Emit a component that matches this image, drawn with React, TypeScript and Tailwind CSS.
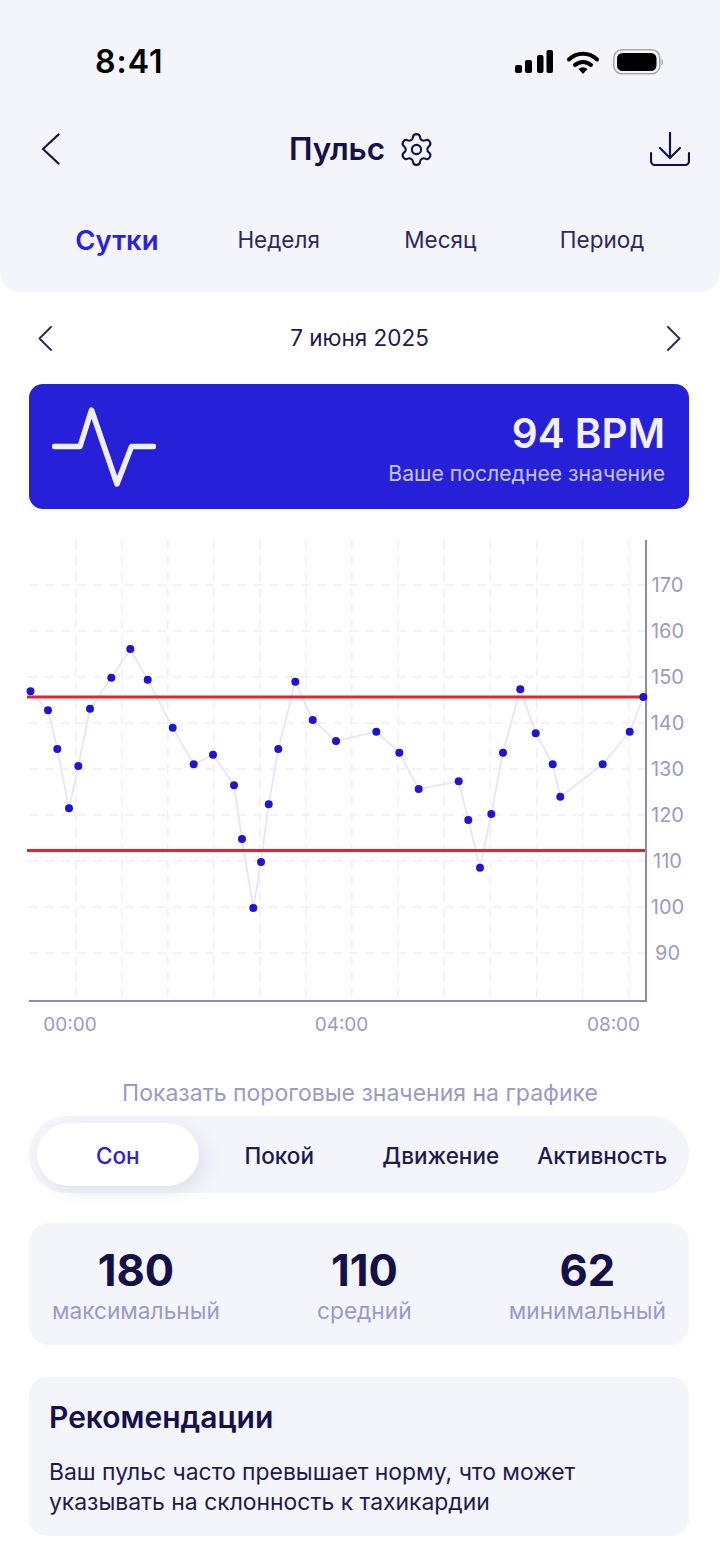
import { Settings } from 'lucide-react';

const dots: [number, number][] = [
  [30.5, 691.3], [48, 710.3], [57.3, 749], [69, 808.3], [78.3, 766], [90, 708.7], [111.3, 677.7], [130.3, 649],
  [147.7, 679.7], [172.7, 727.7], [193.7, 764.3], [213, 754.7], [234, 785.3], [242, 839], [253.3, 908], [261, 862],
  [268.7, 804.3], [278.3, 749], [295.3, 681.7], [312.7, 720], [336, 741], [376.3, 731.7], [399.3, 752.7], [418.7, 789],
  [458.7, 781.3], [468.3, 820], [480, 867.7], [491.3, 814], [503, 752.7], [520.3, 689.3], [535.7, 733.3], [552.7, 764.3],
  [560.3, 796.7], [602.7, 764.3], [629.7, 731.7], [643.3, 697],
];

const gridY = [585, 631, 677, 723, 769, 815, 861, 907, 953];
const gridX = [75.7, 121.7, 167.7, 213.7, 259.7, 305.7, 351.7, 398.3, 444.3, 490.3, 536.7, 582.7, 628.7];
const yLabels = [170, 160, 150, 140, 130, 120, 110, 100, 90];
const TOP = 530;

function StatusBar() {
  return (
    <div className="flex h-[124px] items-center justify-between pl-[95px] pr-[56px]">
      <span className="text-[32px] font-semibold leading-none tracking-[1px] text-black">8:41</span>
      <div className="flex items-center">
        <svg width="38" height="24" viewBox="0 0 38 24" className="mr-[14px]">
          <rect x="0" y="15" width="7" height="8" rx="2" fill="#000" />
          <rect x="10" y="10" width="7" height="13" rx="2" fill="#000" />
          <rect x="22" y="5" width="6.5" height="18" rx="2" fill="#000" />
          <rect x="31.5" y="0" width="6.5" height="23" rx="2" fill="#000" />
        </svg>
        <svg width="32" height="23" viewBox="0 0 32 23" className="mr-[14px]">
          <path d="M2 8.5 A20 20 0 0 1 30 8.5" fill="none" stroke="#000" strokeWidth="4" strokeLinecap="round" />
          <path d="M8 14 A12 12 0 0 1 24 14" fill="none" stroke="#000" strokeWidth="4" strokeLinecap="round" />
          <path d="M16 23 L11.5 18 A6.5 6.5 0 0 1 20.5 18 Z" fill="#000" />
        </svg>
        <svg width="51" height="26" viewBox="0 0 51 26">
          <rect x="0.8" y="0.8" width="46" height="24" rx="8" fill="none" stroke="#a9a9ad" strokeWidth="1.6" />
          <rect x="4" y="4" width="39.5" height="18" rx="5.5" fill="#000" />
          <path d="M48.5 9.5 C50.5 10.5 50.5 15.5 48.5 16.5 Z" fill="#a9a9ad" />
        </svg>
      </div>
    </div>
  );
}

function NavRow() {
  return (
    <div className="flex h-[50px] items-center pl-[41px] pr-[30px]">
      <svg width="19" height="32" viewBox="0 0 19 32" fill="none" stroke="#14104a" strokeWidth="2.2" strokeLinecap="round" strokeLinejoin="round">
        <path d="M17.5 1.5 L2 16 L17.5 30.5" />
      </svg>
      <div className="ml-[229px] flex items-center gap-[13px]">
        <span className="text-[31.5px] font-semibold leading-none text-[#14104a]">Пульс</span>
        <Settings size={37} strokeWidth={1.35} color="#14104a" />
      </div>
      <svg width="40" height="34" viewBox="0 0 40 34" className="ml-auto" fill="none" stroke="#14104a" strokeWidth="2.2" strokeLinecap="round" strokeLinejoin="round">
        <path d="M20 1 V25" />
        <path d="M10 16 L20 26 L30 16" />
        <path d="M1 21 V29 A4 4 0 0 0 5 33 H35 A4 4 0 0 0 39 29 V21" />
      </svg>
    </div>
  );
}

function Chart() {
  return (
    <svg width="720" height="510" viewBox={`0 ${TOP} 720 510`} className="block">
      {gridY.map(y => (
        <line key={y} x1="29" x2="646" y1={y} y2={y} stroke="#eeeefa" strokeWidth="1.3" strokeDasharray="9 7" />
      ))}
      {gridX.map(x => (
        <line key={x} x1={x} x2={x} y1="540" y2="1000" stroke="#eeeefa" strokeWidth="1.3" strokeDasharray="9 7" />
      ))}
      <polyline points={dots.map(d => d.join(',')).join(' ')} fill="none" stroke="#e6e5fb" strokeWidth="1.8" strokeLinejoin="round" />
      <line x1="27" x2="646" y1="697" y2="697" stroke="#e5232a" strokeWidth="3" />
      <line x1="27" x2="646" y1="850.5" y2="850.5" stroke="#e5232a" strokeWidth="3" />
      <path d="M29 1001 H646 V540" fill="none" stroke="#8c8abd" strokeWidth="2" />
      {dots.map(([x, y]) => (
        <circle key={`${x}-${y}`} cx={x} cy={y} r="4" fill="#1d14d6" />
      ))}
      {yLabels.map((v, i) => (
        <text key={v} x="667.5" y={gridY[i] + 7} textAnchor="middle" fontSize="20" fill="#9a9ac4" fontFamily="Inter, sans-serif">
          {v}
        </text>
      ))}
      {[['00:00', 70], ['04:00', 341.5], ['08:00', 613.5]].map(([t, x]) => (
        <text key={t} x={x} y="1031" textAnchor="middle" fontSize="19" fill="#9a9ac4" fontFamily="Inter, sans-serif">
          {t}
        </text>
      ))}
    </svg>
  );
}

export default function App() {
  return (
    <div className="h-[1542px] w-[720px] overflow-hidden bg-white font-['Inter',sans-serif]">
      {/* header */}
      <div className="h-[292px] rounded-b-[20px] bg-[#f4f4fb]">
        <StatusBar />
        <NavRow />
        <div className="mt-[42px] grid grid-cols-4 pl-[36px] pr-[37px]">
          <span className="text-center text-[27.5px] font-semibold leading-[48px] text-[#2a22dc]">Сутки</span>
          <span className="text-center text-[22.5px] leading-[48px] text-[#2b2a5c]">Неделя</span>
          <span className="text-center text-[22.5px] leading-[48px] text-[#2b2a5c]">Месяц</span>
          <span className="text-center text-[22.5px] leading-[48px] text-[#2b2a5c]">Период</span>
        </div>
      </div>

      {/* date */}
      <div className="mt-[26px] flex h-[40px] items-center justify-between pl-[38px] pr-[39px]">
        <svg width="14" height="25" viewBox="0 0 14 25" fill="none" stroke="#2b2a5c" strokeWidth="1.9" strokeLinecap="round" strokeLinejoin="round">
          <path d="M13 1 L1.5 12.5 L13 24" />
        </svg>
        <span className="text-[22.5px] leading-none text-[#1d1a50]">7 июня 2025</span>
        <svg width="14" height="25" viewBox="0 0 14 25" fill="none" stroke="#2b2a5c" strokeWidth="1.9" strokeLinecap="round" strokeLinejoin="round">
          <path d="M1 1 L12.5 12.5 L1 24" />
        </svg>
      </div>

      {/* last value */}
      <div className="ml-[29px] mt-[26px] flex h-[125px] w-[660px] items-center justify-between rounded-[14px] bg-[#2720d9] pl-[23px] pr-[24px] pt-[3px]">
        <svg width="104" height="80" viewBox="0 0 104 80" className="mt-[-3px]" fill="none" stroke="#eeeefc" strokeWidth="5.5" strokeLinecap="round" strokeLinejoin="round">
          <path d="M2.5 39.5 H28 L39.5 3 L65 77 L79.5 39.5 H101.5" />
        </svg>
        <div className="flex flex-col items-end">
          <span className="text-[40.5px] font-semibold leading-[48px] text-[#f1f1fd]">94 BPM</span>
          <span className="mt-[2px] text-[21.2px] leading-[26px] text-[#c6c4f6]">Ваше последнее значение</span>
        </div>
      </div>

      {/* chart */}
      <div className="mt-[21px]">
        <Chart />
      </div>

      {/* thresholds */}
      <p className="mt-[38px] text-center text-[23px] leading-[30px] text-[#9a9ac6]">Показать пороговые значения на графике</p>
      <div className="ml-[29px] mt-[8px] grid h-[77px] w-[660px] grid-cols-4 items-center rounded-[38px] bg-[#f4f4fb] pl-[8px] pr-[6px] text-center text-[22.5px] font-medium text-[#1d1a50]">
        <div className="flex h-[63px] items-center justify-center rounded-[32px] bg-white pt-[2px] text-[#2a22dc] shadow-[6px_6px_18px_rgba(60,60,120,0.1)]">
          Сон
        </div>
        <span className="pt-[2px]">Покой</span>
        <span className="pt-[2px]">Движение</span>
        <span className="pt-[2px]">Активность</span>
      </div>

      {/* stats */}
      <div className="ml-[29px] mt-[30px] flex h-[122px] w-[660px] items-center justify-between rounded-[20px] bg-[#f4f4fb] px-[23px] pt-[2px]">
        {[['180', 'максимальный'], ['110', 'средний'], ['62', 'минимальный']].map(([value, label]) => (
          <div key={label} className="flex flex-col items-center">
            <span className="text-[43.5px] font-bold leading-[52px] text-[#14104a]">{value}</span>
            <span className="text-[22.7px] leading-[30px] text-[#9a9ac6]">{label}</span>
          </div>
        ))}
      </div>

      {/* recommendations */}
      <div className="ml-[29px] mt-[32px] h-[159px] w-[660px] rounded-[18px] bg-[#f4f4fb] px-[20px] pt-[20px]">
        <h3 className="text-[30px] font-semibold leading-[40px] text-[#14104a]">Рекомендации</h3>
        <p className="mt-[20px] text-[22.9px] leading-[30px] text-[#1d1a50]">
          Ваш пульс часто превышает норму, что может
          <br />
          указывать на склонность к тахикардии
        </p>
      </div>
    </div>
  );
}
